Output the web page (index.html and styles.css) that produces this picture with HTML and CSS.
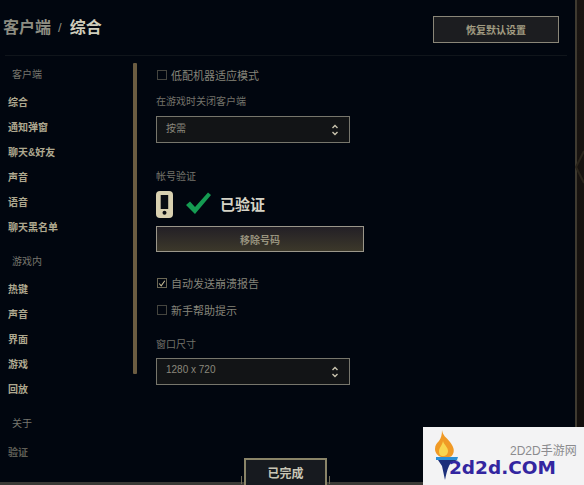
FILE: index.html
```html
<!DOCTYPE html>
<html lang="zh-CN">
<head>
<meta charset="utf-8">
<title>客户端 / 综合</title>
<link rel="stylesheet" href="styles.css">
</head>
<body>
<div class="app">
  <main class="panel">
    <header class="topbar">
      <h1 class="crumb"><span class="crumb-root">客户端</span><span class="crumb-sep">/</span><span class="crumb-now">综合</span></h1>
      <button class="btn btn-reset">恢复默认设置</button>
    </header>
    <div class="body">
      <nav class="nav">
        <div class="nav-head">客户端</div>
        <a class="nav-item">综合</a>
        <a class="nav-item">通知弹窗</a>
        <a class="nav-item">聊天&amp;好友</a>
        <a class="nav-item">声音</a>
        <a class="nav-item">语音</a>
        <a class="nav-item">聊天黑名单</a>
        <div class="nav-head nav-head-game">游戏内</div>
        <a class="nav-item">热键</a>
        <a class="nav-item">声音</a>
        <a class="nav-item">界面</a>
        <a class="nav-item">游戏</a>
        <a class="nav-item">回放</a>
        <div class="nav-head nav-head-about">关于</div>
        <a class="nav-item nav-item-dim">验证</a>
      </nav>
      <div class="scrollbar"></div>
      <section class="content">
        <label class="check check-first"><span class="box"></span>低配机器适应模式</label>
        <div class="label label-close">在游戏时关闭客户端</div>
        <div class="select select-close"><span class="select-value">按需</span><svg class="updown" viewBox="0 0 8 14" width="8" height="14"><path d="M1.5 5 4 2.500 6.500 5M1.500 9 4 11.500 6.500 9" fill="none" stroke="#c8c3ae" stroke-width="1.400"/></svg></div>
        <div class="label label-account">帐号验证</div>
        <div class="verified">
          <svg class="phone" viewBox="0 0 17 27" width="17" height="27"><rect width="17" height="27" rx="4" fill="#d8d0b0"/><rect x="4.700" y="4" width="7.500" height="14" fill="#0a0d12"/><circle cx="8.500" cy="21.800" r="2" fill="#0a0d12"/></svg>
          <svg class="tick" viewBox="0 0 27 23" width="27" height="23"><path d="M1 13 L5 9.500 L10 15 L23 0.500 L26 3 L10 22 Z" fill="#159b52"/></svg>
          <strong class="verified-text">已验证</strong>
        </div>
        <button class="btn btn-remove">移除号码</button>
        <label class="check check-auto"><span class="box box-on"><svg viewBox="0 0 10 10" width="9" height="9"><path d="M1.500 5 4 8 8.500 1.500" fill="none" stroke="#c8bd96" stroke-width="1.300"/></svg></span>自动发送崩溃报告</label>
        <label class="check check-new"><span class="box"></span>新手帮助提示</label>
        <div class="label label-size">窗口尺寸</div>
        <div class="select select-size"><span class="select-value">1280 x 720</span><svg class="updown" viewBox="0 0 8 14" width="8" height="14"><path d="M1.500 5 4 2.500 6.500 5M1.500 9 4 11.500 6.500 9" fill="none" stroke="#c8c3ae" stroke-width="1.400"/></svg></div>
      </section>
    </div>
    <button class="btn btn-done">已完成</button>
  </main>
  <aside class="edge">
    <svg class="edge-mark" viewBox="0 0 9 34" width="9" height="34"><path d="M9 1 1 17 9 33" fill="none" stroke="#2b251c" stroke-width="2"/></svg>
  </aside>
  <div class="watermark">
    <svg class="torch" viewBox="0 0 28 50" width="28" height="50">
      <path d="M8 0c1 6 4 7 8 12 3 4 5 8 3 12-1 2-2 3-4 3H7c-3-1-6-4-6-8 0-4 2-6 4-8 2-3 3-6 3-11z" fill="#f09a26"/>
      <path d="M9 11c1 4 5 6 5 10 0 3-2 5-5 5s-4-2-4-5c0-3 3-5 4-10z" fill="#f9d650"/>
      <path d="M2 27h22l-1 3H2z" fill="#2b8fd6"/>
      <path d="M4 30h20c-4 1-8 3-9 6-2 4-3 9-4 14L8 36z" fill="#1c2f7a"/>
    </svg>
    <div class="wm-text">
      <div class="wm-small">2D2D手游网</div>
      <div class="wm-big">2d2d.COM</div>
    </div>
  </div>
</div>
</body>
</html>
```

FILE: styles.css
```css
* { box-sizing: border-box; }
html, body { margin: 0; height: 100%; }
body {
  background: #01050f;
  font-family: "Liberation Sans", "Noto Sans CJK SC", sans-serif;
  overflow: hidden;
}
.app { position: relative; display: flex; width: 584px; height: 485px; border-bottom: 3px solid #3a3a36; }
.panel { position: relative; flex: 1; min-width: 0; display: flex; flex-direction: column; background: #01060f; }
.edge { position: relative; width: 9px; background: linear-gradient(#1a1512, #120e0c); border-left: 2px solid #3f3a30; }
.edge-mark { position: absolute; right: 0; top: 150px; }
.topbar {
  height: 56px; margin: 0 8px 0 5px; padding: 16px 8px 0 0;
  display: flex; justify-content: space-between; align-items: flex-start;
  border-bottom: 1px solid #10151b;
}
.crumb { margin: -1px 0 0 -2px; display: flex; align-items: center; height: 26px; font-size: 16px; line-height: 26px; font-weight: 400; }
.crumb-root { color: #8d8d82; font-weight: 700; }
.crumb-sep { color: #8d8d82; margin: 0 8px 0 7px; font-size: 13px; }
.crumb-now { color: #cfcdbd; font-weight: 700; }
.btn {
  display: block; padding: 0; font-family: inherit; text-align: center; color: #a39d83;
  border: 1px solid #8a8678; background: #1b1c1e; font-size: 10px; font-weight: 700;
}
.btn-reset { width: 126px; height: 27px; background: #1c1d20; }
.body { flex: 1; display: flex; min-height: 0; }
.nav { width: 133px; padding: 12px 0 0 8px; display: flex; flex-direction: column; }
.nav-head { color: #77766e; font-size: 10px; height: 14px; line-height: 14px; padding-left: 4px; margin-bottom: 14px; }
.nav-head-game { margin-top: 9px; margin-bottom: 14px; }
.nav-head-about { margin-top: 9px; margin-bottom: 15px; }
.nav-item { display: block; color: #aea88f; font-size: 10px; font-weight: 700; height: 25px; line-height: 14px; }
.nav-item-dim { color: #5f5e56; }
.scrollbar { width: 4px; height: 311px; margin-top: 7px; background: #6b5c41; border-radius: 1px; }
.content { width: 208px; padding: 12px 0 0 19px; display: flex; flex-direction: column; align-items: flex-start; }
.check { display: flex; align-items: center; gap: 4px; height: 14px; color: #85847a; font-size: 11px; }
.box { width: 10px; height: 10px; border: 1px solid #45453f; display: flex; align-items: center; justify-content: center; flex: none; margin-left: 1px; }
.box-on { border-color: #6b6754; }
.label { color: #74736b; font-size: 10px; height: 14px; line-height: 14px; }
.label-close { margin-top: 13px; }
.select {
  width: 194px; height: 27px; padding: 0 10px 0 9px;
  display: flex; justify-content: space-between; align-items: center;
  border: 1px solid #77766c; background: #121416; color: #8a887c; font-size: 10px;
}
.select-value { margin-bottom: 4px; }
.select-close { margin-top: 7px; }
.select-size { margin-top: 6px; }
.label-account { margin-top: 27px; }
.verified { display: flex; align-items: flex-start; margin-top: 7px; height: 29px; }
.phone { margin-right: 12px; }
.tick { margin: 1px 8px 0 0; }
.verified-text { color: #d5d3c6; font-size: 15px; line-height: 28px; }
.btn-remove {
  width: 208px; height: 26px; margin-top: 6px;
  background: linear-gradient(#232026, #3c382a); color: #98937e; border-color: #9a968a;
}
.check-auto { margin-top: 24px; }
.check-new { margin-top: 13px; }
.label-size { margin-top: 21px; }
.btn-done {
  position: absolute; left: 244px; top: 458px; width: 83px; height: 27px;
  color: #c8c5b5; font-size: 12px; background: #171a1f; border: 2px solid #8a8468; border-bottom: 0;
}
.btn-done::before, .btn-done::after {
  content: ""; position: absolute; top: 16px; width: 1px; height: 8px; background: #6f6a56;
}
.btn-done::before { left: -5px; }
.btn-done::after { right: -5px; }
.watermark {
  position: absolute; right: 0; top: 427px; width: 161px; height: 58px;
  background: #f3f3f4; display: flex; align-items: flex-start; padding: 3px 0 0 11px;
}
.torch { flex: none; margin-right: -13px; }
.wm-text { display: flex; flex-direction: column; align-items: flex-start; padding-top: 15px; }
.wm-small { color: #8b8b8e; font-size: 12px; line-height: 13px; margin-left: 61px; white-space: nowrap; }
.wm-big { color: #3326a0; font-family: "DejaVu Sans", sans-serif; font-weight: 700; font-size: 18.5px; line-height: 20px; white-space: nowrap; }
```
